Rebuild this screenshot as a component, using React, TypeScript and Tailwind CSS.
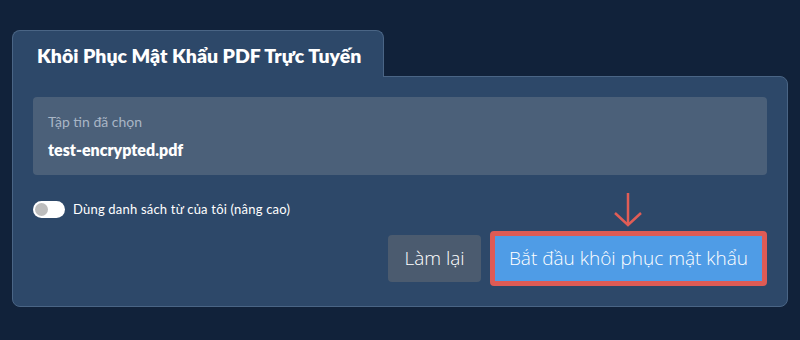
export default function App() {
  return (
    <div className="w-[800px] h-[340px] bg-[#11223a] pt-[30px] pl-[12px] pr-[12px] font-['Lato','Noto_Sans',sans-serif]">
      {/* tab */}
      <div className="relative z-10 -mb-px w-[372px] h-[47px] rounded-t-lg border border-b-0 border-[#4a6585] bg-[#2d4869] pl-[24px] pt-[13px]">
        <h1 className="text-[19.5px] leading-[24px] font-extrabold text-white">Khôi Phục Mật Khẩu PDF Trực Tuyến</h1>
      </div>

      {/* card */}
      <div className="relative rounded-b-lg rounded-tr-lg border border-[#4a6585] bg-[#2d4869] p-5">
        <div className="h-[78px] rounded bg-[#4b6079] px-[15px] pt-[17px]">
          <div className="text-[14px] leading-4 text-[#a9b6c6]">Tập tin đã chọn</div>
          <div className="mt-[10px] text-[16px] leading-5 font-extrabold text-white">test-encrypted.pdf</div>
        </div>

        <div className="mt-[25px] flex items-center gap-2">
          <div className="flex h-[17px] w-[32px] items-center rounded-full bg-white px-[2px]">
            <div className="h-[13px] w-[13px] rounded-full bg-[#bdbdbd]" />
          </div>
          <span className="text-[13px] tracking-[0.2px] text-white">Dùng danh sách từ của tôi (nâng cao)</span>
        </div>

        <div className="mt-[11px] flex items-center justify-end gap-[9px]">
          <button className="h-[47px] w-[93px] rounded bg-[#4b5b6f] font-['Open_Sans',sans-serif] text-[19px] font-light text-white">Làm lại</button>
          <div className="relative">
            <svg className="absolute left-[123px] -top-[38px]" width="30" height="34" viewBox="0 0 30 34" fill="none">
              <line x1="15" y1="0" x2="15" y2="32" stroke="#e05d56" strokeWidth="2.5" />
              <polyline points="2,20 15,32 28,20" stroke="#e05d56" strokeWidth="2.5" fill="none" />
            </svg>
            <div className="rounded border-[5px] border-[#de5b55]">
              <button className="h-[45px] w-[267px] bg-[#4f9ce6] font-['Open_Sans',sans-serif] text-[19px] font-light text-white">Bắt đầu khôi phục mật khẩu</button>
            </div>
          </div>
        </div>
      </div>
    </div>
  );
}
